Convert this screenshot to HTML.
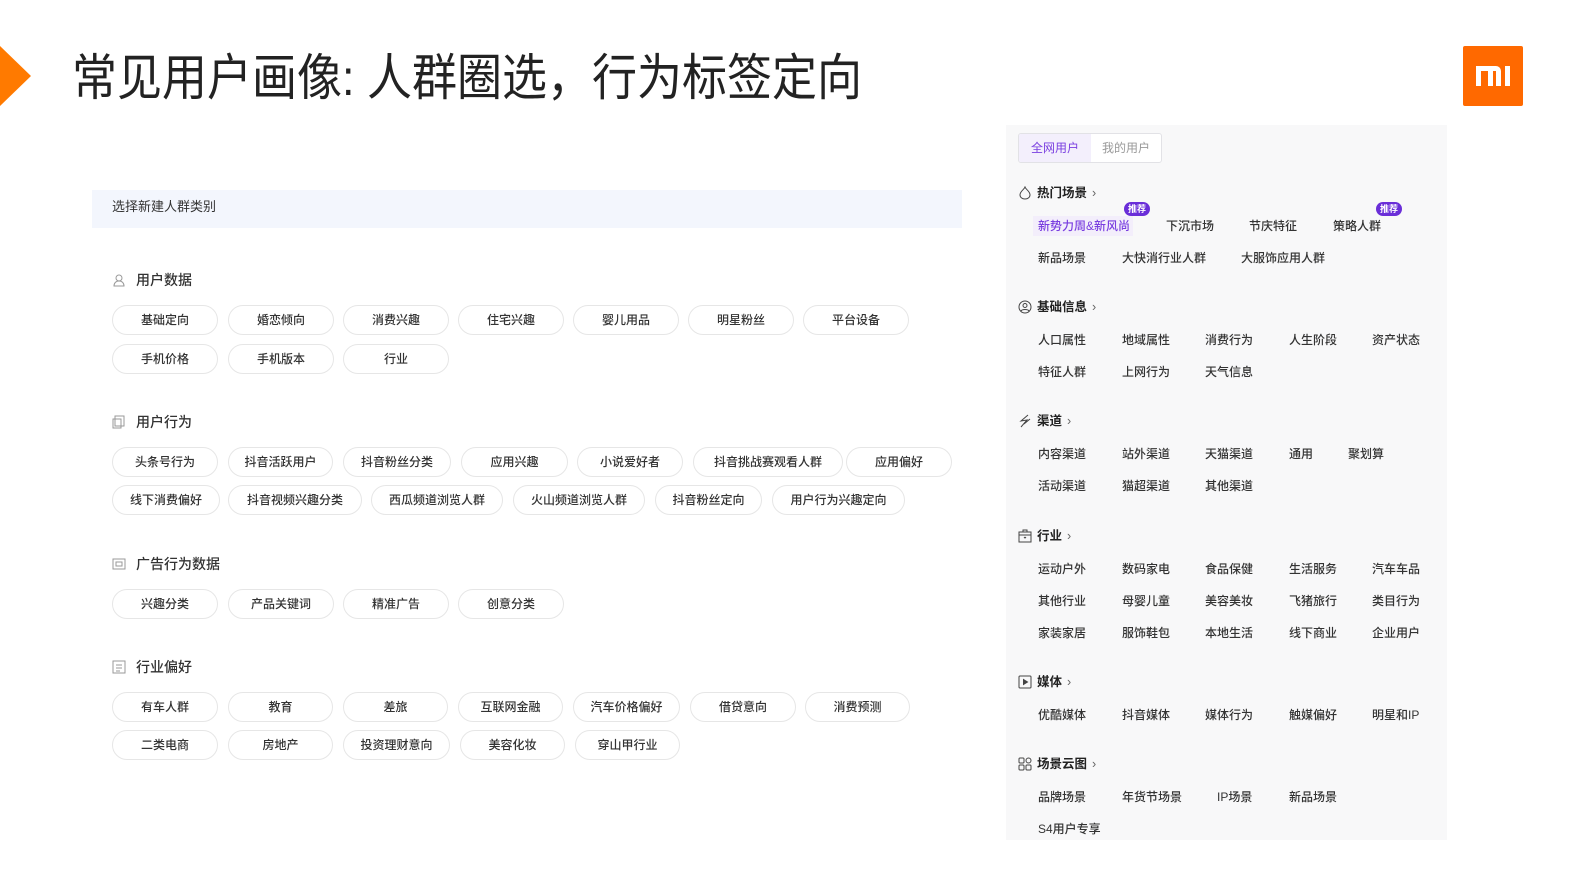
<!DOCTYPE html>
<html><head><meta charset="utf-8">
<style>
*{margin:0;padding:0;box-sizing:border-box}
body{width:1587px;height:892px;background:#fff;position:relative;overflow:hidden;font-family:"Liberation Sans","Noto Sans CJK SC",sans-serif;color:#333}
.a{position:absolute}
.c{position:absolute;height:30px;border:1px solid #e6e6e6;border-radius:15px;background:#fff;font-size:12px;color:#333;font-weight:500;text-align:center;line-height:28px}
.h{position:absolute;font-size:14px;color:#333;display:flex;align-items:center;gap:10px;font-weight:500}
.t{position:absolute;font-size:12px;color:#333;white-space:nowrap;line-height:16px;font-weight:500}
.s{position:absolute;font-size:12.5px;font-weight:bold;color:#222;display:flex;align-items:center;gap:5px;line-height:16px}
.s i{font-style:normal;font-weight:normal;color:#666}
.b{position:absolute;background:#6a2ed8;color:#fff;font-size:9px;border-radius:8px;padding:0 4px;line-height:14px;font-weight:bold}
</style></head><body>
<div class="a" style="left:0;top:46px;width:0;height:0;border-top:30px solid transparent;border-bottom:30px solid transparent;border-left:31px solid #ff7a00"></div>
<div class="a" style="left:72px;top:48px;font-size:50px;color:#222;line-height:60px;white-space:nowrap;transform:scaleX(0.9);transform-origin:0 0">常见用户画像: 人群圈选，行为标签定向</div>
<div class="a" style="left:1463px;top:46px;width:60px;height:60px;background:#ff6900;border-radius:2px">
<svg width="60" height="60" viewBox="0 0 60 60"><path d="M13 20h20a5 5 0 0 1 5 5v15h-5V25H30v15h-5V25h-7v15h-5z M42 20h5v20h-5z" fill="#fff"/></svg></div>

<div class="a" style="left:92px;top:190px;width:870px;height:38px;background:#f3f6fd"></div>
<div class="a" style="left:112px;top:196px;font-size:13px;color:#333">选择新建人群类别</div>

<div class="h" style="left:112px;top:270px"><svg width="14" height="14" viewBox="0 0 14 14" fill="none" stroke="#999"><circle cx="7" cy="5" r="3"/><path d="M2 13c0-3 2-5 5-5s5 2 5 5z"/></svg>用户数据</div>
<div class="c" style="left:112px;top:305px;width:106px">基础定向</div>
<div class="c" style="left:228px;top:305px;width:106px">婚恋倾向</div>
<div class="c" style="left:343px;top:305px;width:106px">消费兴趣</div>
<div class="c" style="left:458px;top:305px;width:106px">住宅兴趣</div>
<div class="c" style="left:573px;top:305px;width:106px">婴儿用品</div>
<div class="c" style="left:688px;top:305px;width:106px">明星粉丝</div>
<div class="c" style="left:803px;top:305px;width:106px">平台设备</div>
<div class="c" style="left:112px;top:344px;width:106px">手机价格</div>
<div class="c" style="left:228px;top:344px;width:106px">手机版本</div>
<div class="c" style="left:343px;top:344px;width:106px">行业</div>

<div class="h" style="left:112px;top:412px"><svg width="14" height="14" viewBox="0 0 14 14" fill="none" stroke="#999"><rect x="3" y="1" width="9" height="10"/><rect x="1" y="4" width="8" height="9"/></svg>用户行为</div>
<div class="c" style="left:112px;top:447px;width:106px">头条号行为</div>
<div class="c" style="left:228px;top:447px;width:105px">抖音活跃用户</div>
<div class="c" style="left:343px;top:447px;width:108px">抖音粉丝分类</div>
<div class="c" style="left:461px;top:447px;width:107px">应用兴趣</div>
<div class="c" style="left:577px;top:447px;width:106px">小说爱好者</div>
<div class="c" style="left:693px;top:447px;width:150px">抖音挑战赛观看人群</div>
<div class="c" style="left:846px;top:447px;width:106px">应用偏好</div>
<div class="c" style="left:112px;top:485px;width:108px">线下消费偏好</div>
<div class="c" style="left:228px;top:485px;width:134px">抖音视频兴趣分类</div>
<div class="c" style="left:371px;top:485px;width:132px">西瓜频道浏览人群</div>
<div class="c" style="left:513px;top:485px;width:132px">火山频道浏览人群</div>
<div class="c" style="left:655px;top:485px;width:107px">抖音粉丝定向</div>
<div class="c" style="left:772px;top:485px;width:133px">用户行为兴趣定向</div>

<div class="h" style="left:112px;top:554px"><svg width="14" height="14" viewBox="0 0 14 14" fill="none" stroke="#999"><rect x="1" y="2" width="12" height="10"/><rect x="4" y="5" width="6" height="4"/></svg>广告行为数据</div>
<div class="c" style="left:112px;top:589px;width:106px">兴趣分类</div>
<div class="c" style="left:228px;top:589px;width:106px">产品关键词</div>
<div class="c" style="left:343px;top:589px;width:106px">精准广告</div>
<div class="c" style="left:458px;top:589px;width:106px">创意分类</div>

<div class="h" style="left:112px;top:657px"><svg width="14" height="14" viewBox="0 0 14 14" fill="none" stroke="#999"><rect x="1" y="1" width="12" height="12"/><path d="M4 5h6M4 8h6M4 11h4"/></svg>行业偏好</div>
<div class="c" style="left:112px;top:692px;width:106px">有车人群</div>
<div class="c" style="left:228px;top:692px;width:105px">教育</div>
<div class="c" style="left:343px;top:692px;width:105px">差旅</div>
<div class="c" style="left:458px;top:692px;width:105px">互联网金融</div>
<div class="c" style="left:573px;top:692px;width:107px">汽车价格偏好</div>
<div class="c" style="left:690px;top:692px;width:106px">借贷意向</div>
<div class="c" style="left:805px;top:692px;width:105px">消费预测</div>
<div class="c" style="left:112px;top:730px;width:106px">二类电商</div>
<div class="c" style="left:228px;top:730px;width:105px">房地产</div>
<div class="c" style="left:343px;top:730px;width:107px">投资理财意向</div>
<div class="c" style="left:460px;top:730px;width:105px">美容化妆</div>
<div class="c" style="left:575px;top:730px;width:105px">穿山甲行业</div>

<div class="a" style="left:1006px;top:125px;width:441px;height:715px;background:#f8f8f9"></div>
<div class="a" style="left:1018px;top:133px;width:144px;height:30px;border:1px solid #e2e2e6;border-radius:3px;background:#fff;overflow:hidden">
<div class="a" style="left:0;top:0;width:72px;height:28px;background:#f3effc;color:#7a3fe0;font-size:12px;line-height:28px;text-align:center">全网用户</div>
<div class="a" style="left:72px;top:0;width:70px;height:28px;color:#999;font-size:12px;line-height:28px;text-align:center">我的用户</div></div>

<div class="s" style="left:1018px;top:185px"><svg width="14" height="14" viewBox="0 0 14 14" fill="none" stroke="#444"><path d="M7 1c1 3 5 4 5 8a5 4 0 0 1-10 0c0-4 4-5 5-8z"/></svg>热门场景<i>›</i></div>
<div class="b" style="left:1124px;top:202px">推荐</div>
<div class="b" style="left:1376px;top:202px">推荐</div>
<div class="a" style="left:1033px;top:216px;width:100px;height:20px;background:#f3eefb"></div>
<div class="t" style="left:1038px;top:218px;color:#7a3fe0">新势力周&amp;新风尚</div>
<div class="t" style="left:1166px;top:218px">下沉市场</div>
<div class="t" style="left:1249px;top:218px">节庆特征</div>
<div class="t" style="left:1333px;top:218px">策略人群</div>
<div class="t" style="left:1038px;top:250px">新品场景</div>
<div class="t" style="left:1122px;top:250px">大快消行业人群</div>
<div class="t" style="left:1241px;top:250px">大服饰应用人群</div>

<div class="s" style="left:1018px;top:299px"><svg width="14" height="14" viewBox="0 0 14 14" fill="none" stroke="#444"><circle cx="7" cy="7" r="6"/><circle cx="7" cy="5.5" r="2"/><path d="M3 11c1-2 7-2 8 0"/></svg>基础信息<i>›</i></div>
<div class="t" style="left:1038px;top:332px">人口属性</div><div class="t" style="left:1122px;top:332px">地域属性</div><div class="t" style="left:1205px;top:332px">消费行为</div><div class="t" style="left:1289px;top:332px">人生阶段</div><div class="t" style="left:1372px;top:332px">资产状态</div>
<div class="t" style="left:1038px;top:364px">特征人群</div><div class="t" style="left:1122px;top:364px">上网行为</div><div class="t" style="left:1205px;top:364px">天气信息</div>

<div class="s" style="left:1018px;top:413px"><svg width="14" height="14" viewBox="0 0 14 14" fill="none" stroke="#444"><path d="M10 1L3 7l6-1-6 7M12 5L6 10"/></svg>渠道<i>›</i></div>
<div class="t" style="left:1038px;top:446px">内容渠道</div><div class="t" style="left:1122px;top:446px">站外渠道</div><div class="t" style="left:1205px;top:446px">天猫渠道</div><div class="t" style="left:1289px;top:446px">通用</div><div class="t" style="left:1348px;top:446px">聚划算</div>
<div class="t" style="left:1038px;top:478px">活动渠道</div><div class="t" style="left:1122px;top:478px">猫超渠道</div><div class="t" style="left:1205px;top:478px">其他渠道</div>

<div class="s" style="left:1018px;top:528px"><svg width="14" height="14" viewBox="0 0 14 14" fill="none" stroke="#444"><rect x="1" y="3" width="12" height="10"/><path d="M5 3V1h4v2M1 6h12M6 8l1 1 1-1"/></svg>行业<i>›</i></div>
<div class="t" style="left:1038px;top:561px">运动户外</div><div class="t" style="left:1122px;top:561px">数码家电</div><div class="t" style="left:1205px;top:561px">食品保健</div><div class="t" style="left:1289px;top:561px">生活服务</div><div class="t" style="left:1372px;top:561px">汽车车品</div>
<div class="t" style="left:1038px;top:593px">其他行业</div><div class="t" style="left:1122px;top:593px">母婴儿童</div><div class="t" style="left:1205px;top:593px">美容美妆</div><div class="t" style="left:1289px;top:593px">飞猪旅行</div><div class="t" style="left:1372px;top:593px">类目行为</div>
<div class="t" style="left:1038px;top:625px">家装家居</div><div class="t" style="left:1122px;top:625px">服饰鞋包</div><div class="t" style="left:1205px;top:625px">本地生活</div><div class="t" style="left:1289px;top:625px">线下商业</div><div class="t" style="left:1372px;top:625px">企业用户</div>

<div class="s" style="left:1018px;top:674px"><svg width="14" height="14" viewBox="0 0 14 14" fill="none" stroke="#444"><rect x="1" y="1" width="12" height="12" rx="1"/><path d="M5.5 4.5v5l4-2.5z" fill="#444"/></svg>媒体<i>›</i></div>
<div class="t" style="left:1038px;top:707px">优酷媒体</div><div class="t" style="left:1122px;top:707px">抖音媒体</div><div class="t" style="left:1205px;top:707px">媒体行为</div><div class="t" style="left:1289px;top:707px">触媒偏好</div><div class="t" style="left:1372px;top:707px">明星和IP</div>

<div class="s" style="left:1018px;top:756px"><svg width="14" height="14" viewBox="0 0 14 14" fill="none" stroke="#444"><rect x="1" y="1" width="5" height="5" rx="1"/><circle cx="10.5" cy="3.5" r="2.5"/><rect x="1" y="8" width="5" height="5" rx="1"/><rect x="8" y="8" width="5" height="5" rx="1"/></svg>场景云图<i>›</i></div>
<div class="t" style="left:1038px;top:789px">品牌场景</div><div class="t" style="left:1122px;top:789px">年货节场景</div><div class="t" style="left:1217px;top:789px">IP场景</div><div class="t" style="left:1289px;top:789px">新品场景</div>
<div class="t" style="left:1038px;top:821px">S4用户专享</div>
</body></html>
